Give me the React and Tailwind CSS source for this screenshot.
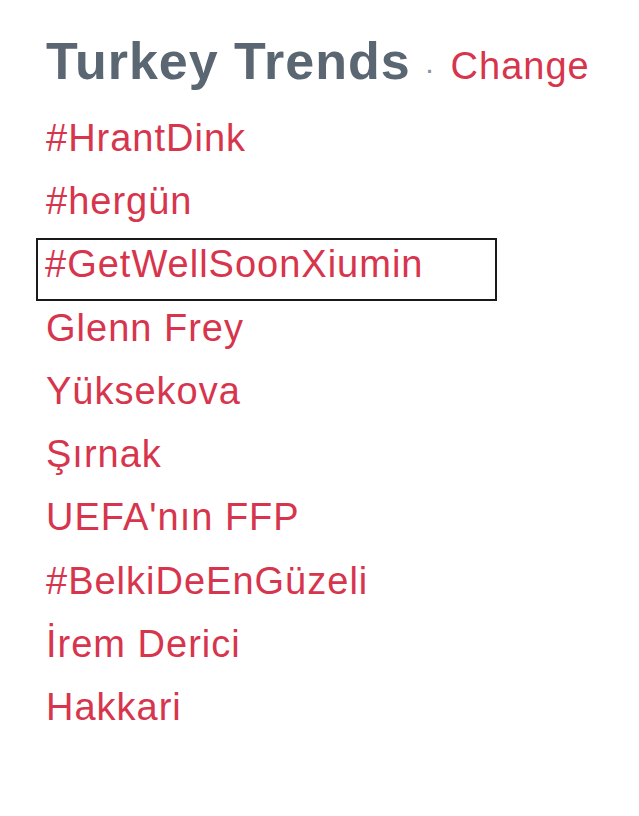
export default function App() {
  const trends = [
    "#HrantDink",
    "#hergün",
    "#GetWellSoonXiumin",
    "Glenn Frey",
    "Yüksekova",
    "Şırnak",
    "UEFA'nın FFP",
    "#BelkiDeEnGüzeli",
    "İrem Derici",
    "Hakkari",
  ];

  return (
    <div className="w-[639px] h-[816px] bg-white pt-[26px] pl-[46px] font-['Liberation_Sans',Arial,sans-serif]">
      {/* Header */}
      <div className="flex items-baseline h-[70px]">
        <h2 className="text-[52px] leading-[70px] font-bold tracking-[1px] text-[#5b6673]">Turkey Trends</h2>
        <span className="text-[30px] text-[#8a939c] ml-[14px] mr-[16px]">·</span>
        <a href="#" className="text-[38px] tracking-[1px] text-[#d7354d]">Change</a>
      </div>

      {/* Trend list */}
      <ul className="mt-[10px]">
        {trends.map((t, i) =>
          i === 2 ? (
            <li key={t} className="h-[63.3px] flex items-start">
              <a
                href="#"
                className="block box-border h-[63px] w-[461px] mt-[5px] -ml-[10px] pl-[7px] border-2 border-[#1a1a1a] text-[38px] leading-[49px] tracking-[1px] text-[#d7354d]"
              >
                {t}
              </a>
            </li>
          ) : (
            <li key={t} className="h-[63.3px] flex items-center">
              <a href="#" className="text-[38px] leading-[60px] tracking-[1px] text-[#d7354d]">
                {t}
              </a>
            </li>
          )
        )}
      </ul>
    </div>
  );
}
